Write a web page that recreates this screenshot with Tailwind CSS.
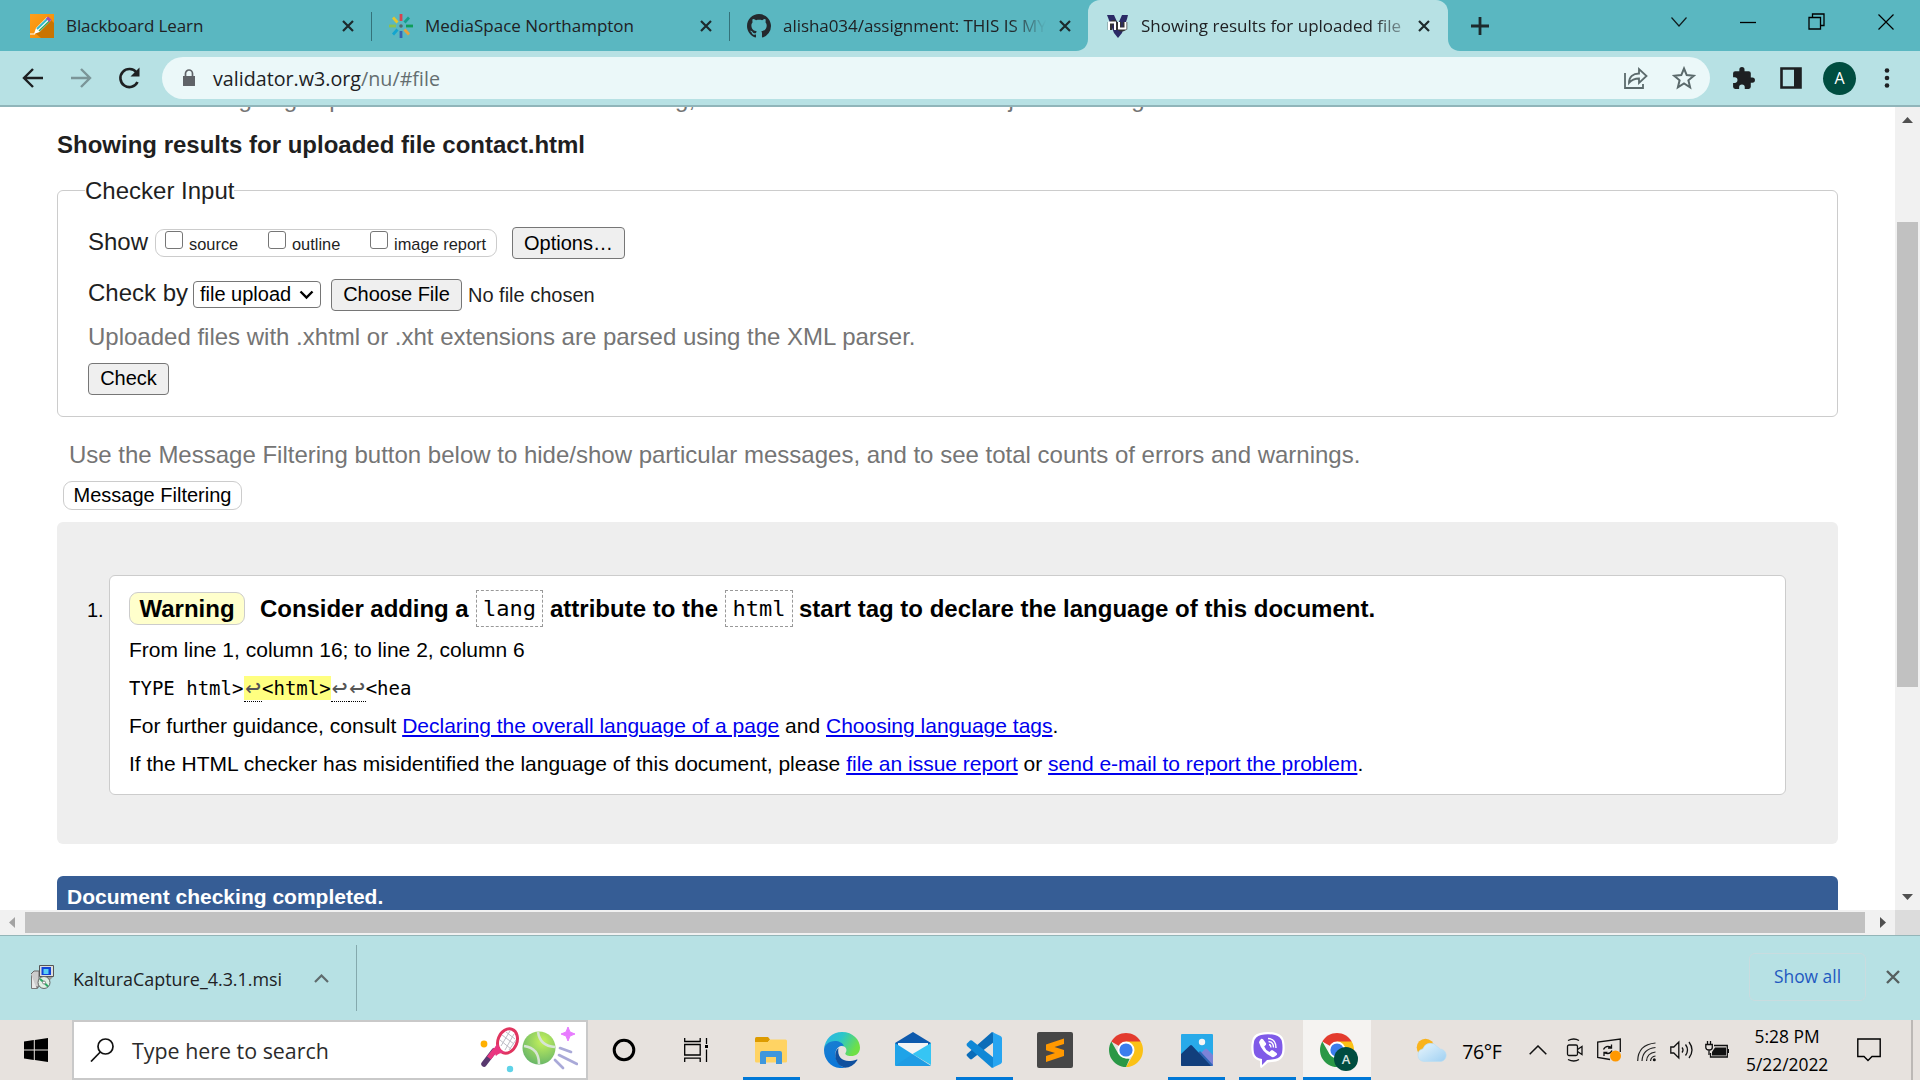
<!DOCTYPE html>
<html lang="en">
<head>
<meta charset="utf-8">
<title>Showing results for uploaded file contact.html</title>
<script src="https://cdn.jsdelivr.net/npm/@tailwindcss/browser@4"></script>
</head>
<body class="w-[1920px] h-[1080px] overflow-hidden flex flex-col bg-white font-['Open_Sans',sans-serif] text-[#202124]">

<!-- Tab strip -->
<header class="h-[51px] shrink-0 flex bg-[#5ab7c1] text-[17px] leading-[51px] whitespace-nowrap">
  <div class="w-[372px] flex items-center pl-[30px] relative">
    <svg class="w-6 h-6 shrink-0" viewBox="0 0 24 24"><defs><linearGradient id="bb" x1="0" y1="0" x2="1" y2="1"><stop offset="0" stop-color="#ff9f1c"/><stop offset="1" stop-color="#f08a00"/></linearGradient></defs><path fill="url(#bb)" d="M0 0h24v24H0z"/><path fill="#c97400" d="M21 6l3 3v15H11l-6-5z"/><path fill="#fff" d="M4 20l2-6L17 3l4 3.500L9.500 18z"/><path stroke="#35b9c8" stroke-width="2" d="M7 15L17.500 4.800"/><path stroke="#3aa657" stroke-width="1.600" d="M9 17L19.500 7"/><path stroke="#a54bb5" stroke-width="3" d="M17 3.500l3.500 3.300"/><path stroke="#fff" d="M0 20h5"/></svg>
    <span class="ml-3 w-[275px] tracking-[-0.1px]">Blackboard Learn</span>
    <svg class="w-3.5 h-3.5 shrink-0" viewBox="0 0 14 14"><path d="M2 2l10 10M12 2L2 12" stroke="#1d2a2c" stroke-width="2.200"/></svg>
    <span class="absolute right-0 top-3 h-[29px] w-px bg-[#34727a]"></span>
  </div>
  <div class="w-[358px] flex items-center pl-[17px] relative">
    <svg class="w-6 h-6 shrink-0" viewBox="0 0 24 24" stroke-width="2.800"><path stroke="#d8434e" d="M12 0v7"/><path stroke="#14a08c" d="M20 3.500l-4.500 5"/><path stroke="#0f9d58" d="M24 12h-7"/><path stroke="#e8a33c" d="M20 20.500l-4.500-5"/><path stroke="#3763b0" d="M12 24v-7"/><path stroke="#13a5cf" d="M4 20.500l4.500-5"/><path stroke="#8cc152" d="M0 12h7"/><path stroke="#e6c72c" d="M4 3.500l4.500 5"/><circle cx="12" cy="12" r="1.800" fill="#56666a" stroke="none"/></svg>
    <span class="ml-3 w-[274px]">MediaSpace Northampton</span>
    <svg class="w-3.5 h-3.5 shrink-0" viewBox="0 0 14 14"><path d="M2 2l10 10M12 2L2 12" stroke="#1d2a2c" stroke-width="2.200"/></svg>
    <span class="absolute right-0 top-3 h-[29px] w-px bg-[#34727a]"></span>
  </div>
  <div class="w-[358px] flex items-center pl-[17px]">
    <svg class="w-6 h-6 shrink-0" viewBox="0 0 16 16"><path fill="#24292e" d="M8 0C3.580 0 0 3.580 0 8c0 3.540 2.290 6.530 5.470 7.590.4.070.55-.17.55-.38 0-.19-.01-.82-.01-1.490-2.010.37-2.530-.49-2.690-.94-.09-.23-.48-.94-.82-1.130-.28-.15-.68-.52-.01-.53.63-.01 1.080.58 1.230.82.72 1.210 1.870.87 2.330.66.07-.52.28-.87.51-1.070-1.780-.2-3.640-.89-3.640-3.950 0-.87.31-1.590.82-2.150-.08-.2-.36-1.020.08-2.120 0 0 .67-.21 2.200.82.64-.18 1.320-.27 2-.27s1.360.09 2 .27c1.530-1.040 2.200-.82 2.200-.82.44 1.100.16 1.920.08 2.120.51.56.82 1.270.82 2.150 0 3.070-1.870 3.750-3.650 3.950.29.25.54.73.54 1.480 0 1.070-.01 1.930-.01 2.200 0 .21.15.46.55.38A8.010 8.010 0 0016 8c0-4.420-3.580-8-8-8z"/></svg>
    <span class="ml-3 w-[263px] mr-3 overflow-hidden tracking-[-0.05px] [mask-image:linear-gradient(to_right,#000_86%,transparent)]">alisha034/assignment: THIS IS MY</span>
    <svg class="w-3.5 h-3.5 shrink-0" viewBox="0 0 14 14"><path d="M2 2l10 10M12 2L2 12" stroke="#1d2a2c" stroke-width="2.200"/></svg>
  </div>
  <div class="w-[360px] flex items-center pl-[18px] bg-[#b7e1e4] rounded-t-[12px] relative">
    <svg class="absolute -left-3 bottom-0 w-3 h-3" viewBox="0 0 12 12"><path fill="#b7e1e4" d="M12 0v12H0C7 12 12 7 12 0z"/></svg>
    <svg class="absolute -right-3 bottom-0 w-3 h-3" viewBox="0 0 12 12"><path fill="#b7e1e4" d="M0 0v12h12C5 12 0 7 0 0z"/></svg>
    <svg class="w-6 h-6 shrink-0" viewBox="0 0 24 24"><path fill="#2b2a66" d="M1 1h7l4 9 4-9h6l-1 4-5 14-4 5-4-5z"/><path fill="none" stroke="#333" stroke-width="4.500" d="M4 16V8M4 10q5-4 6 1v5M13 8v5q1 4 6 1V8"/><path fill="none" stroke="#fff" stroke-width="2" d="M3 16V8.500h6V16M13 8v6.500h6.500V8"/></svg>
    <span class="ml-[11px] w-[262px] mr-[14px] overflow-hidden [mask-image:linear-gradient(to_right,#000_88%,rgba(0,0,0,.35))]">Showing results for uploaded file</span>
    <svg class="w-3.5 h-3.5 shrink-0" viewBox="0 0 14 14"><path d="M2 2l10 10M12 2L2 12" stroke="#1d2a2c" stroke-width="2.200"/></svg>
  </div>
  <div class="flex flex-1 items-center pl-[23px] text-[#101c1e]">
    <svg class="w-[18px] h-[18px]" viewBox="0 0 18 18"><path d="M9 0v18M0 9h18" stroke="#1d2a2c" stroke-width="2.800"/></svg>
    <svg class="ml-[182px] mb-2 w-[16px] h-[16px]" viewBox="0 0 16 16"><path d="M.5 3.500L8 12l7.500-8.500" fill="none" stroke="#101c1e" stroke-width="1.200"/></svg>
    <svg class="ml-[53px] mb-2 w-[16px] h-[16px]" viewBox="0 0 16 16"><path d="M0 8.500h16" stroke="#000" stroke-width="1.300"/></svg>
    <svg class="ml-[52px] mb-2 w-[17px] h-[17px]" viewBox="0 0 17 17"><path d="M1 4.500h11.500V16H1zM4.500 4.500V1H16v11.500h-3.500" fill="none" stroke="#000" stroke-width="1.300"/></svg>
    <svg class="ml-[53px] mb-2 w-[16px] h-[16px]" viewBox="0 0 16 16"><path d="M.5.5l15 15M15.500.5l-15 15" stroke="#000" stroke-width="1.200"/></svg>
  </div>
</header>

<!-- Toolbar -->
<nav class="h-14 shrink-0 flex items-start bg-[#b7e1e4] border-b-2 border-[#90b5ba] pt-1.5 pl-[21px]">
  <div class="flex h-[42px] items-center">
    <svg class="w-6 h-6" viewBox="0 0 24 24"><path d="M22 12H3M12 3l-9 9 9 9" fill="none" stroke="#1d2022" stroke-width="2.400"/></svg>
    <svg class="ml-6 w-6 h-6" viewBox="0 0 24 24"><path d="M2 12h19M12 3l9 9-9 9" fill="none" stroke="#7b9598" stroke-width="2.400"/></svg>
    <svg class="ml-6 w-6 h-6" viewBox="0 0 24 24"><path d="M20.500 16a9 9 0 1 1-1-9.500" fill="none" stroke="#1d2022" stroke-width="2.600"/><path d="M22.500 1.500V10.500h-9z" fill="#1d2022"/></svg>
  </div>
  <div class="ml-[21px] w-[1548px] h-[42px] rounded-full bg-[#ebf8f9] flex items-center pl-[20px]">
    <svg class="w-[14px] h-[18px]" viewBox="0 0 14 18"><path d="M1 7h12v9.500q0 .5-.5.5h-11q-.5 0-.5-.5z" fill="#5f6368"/><path d="M3.500 7V4.500a3.500 3.500 0 0 1 7 0V7" fill="none" stroke="#5f6368" stroke-width="1.700"/></svg>
    <span class="ml-[17px] flex-1 text-[19.700px] leading-[42px] pt-px">validator.w3.org<span class="text-[#646e70]">/nu/#file</span></span>
    <svg class="w-6 h-6" viewBox="0 0 24 24" fill="none" stroke="#5b6a6c" stroke-width="1.800"><path d="M1 7v15h18v-4"/><path d="M5 17c0-6 4-9.500 10-9.500V3l7.500 7-7.500 7v-4.500c-5 0-7.500 1.500-10 4.500z" stroke-linejoin="miter"/></svg>
    <svg class="ml-[24px] mr-[14px] w-6 h-6" viewBox="0 0 24 24"><path d="M12 2.500l2.700 6.600 7.100.6-5.400 4.600 1.700 7L12 17.500l-6.100 3.800 1.700-7L2.200 9.700l7.100-.6z" fill="none" stroke="#5b6a6c" stroke-width="2"/></svg>
  </div>
  <div class="flex h-[42px] items-center">
    <svg class="ml-[21px] w-[25px] h-[25px]" viewBox="0 0 24 24"><path fill="#1d2022" d="M20.500 11H19V7a2 2 0 0 0-2-2h-4V3.500a2.500 2.500 0 0 0-5 0V5H4a2 2 0 0 0-2 2v3.800h1.500a2.700 2.700 0 0 1 0 5.400H2V20a2 2 0 0 0 2 2h3.800v-1.500a2.700 2.700 0 0 1 5.400 0V22H17a2 2 0 0 0 2-2v-4h1.500a2.500 2.500 0 0 0 0-5z"/></svg>
    <svg class="ml-[24px] w-[22px] h-[22px]" viewBox="0 0 22 22"><path d="M1.500 1.500h19v19h-19z" fill="none" stroke="#1d2022" stroke-width="2.600"/><path fill="#1d2022" d="M14 1h7v20h-7z"/></svg>
    <span class="ml-[21px] w-[33px] h-[33px] rounded-full bg-[#004d40] text-white text-[16px] leading-[33px] text-center">A</span>
    <svg class="ml-[28px] w-[6px] h-[20px]" viewBox="0 0 6 20" fill="#1d2022"><circle cx="3" cy="2.500" r="2.300"/><circle cx="3" cy="10" r="2.300"/><circle cx="3" cy="17.500" r="2.300"/></svg>
  </div>
</nav>

<!-- Web page with its vertical scrollbar -->
<div class="h-[803px] shrink-0 flex overflow-hidden">
  <main class="w-[1895px] h-full overflow-hidden pl-[57px] font-['Liberation_Sans',Arial,sans-serif] text-2xl leading-7 text-[#1f1f1f]">
    <p class="-mt-[22px] h-7 text-[#757575] whitespace-nowrap">This tool is an ongoing experiment in better HTML checking, and its behavior remains subject to change</p>
    <h1 class="mt-[18px] h-7 font-bold">Showing results for uploaded file contact.html</h1>
    <fieldset class="mt-[18px] w-[1781px] h-[240px] border border-[#ccc] rounded-md pl-[30px]">
      <legend class="-ml-[3px] h-[26px]">Checker Input</legend>
      <div class="mt-[24px] flex items-start h-8">
        <span class="w-[67px] pt-px">Show</span>
        <div class="mt-0.5 w-[342px] h-7 flex border border-[#ccc] rounded-[9px] text-[16.400px]">
          <span class="ml-[9px] mt-px w-[18px] h-[18px] rounded-[3px] border-[1.500px] border-[#767676] bg-white"></span><span class="ml-[6px] w-[79px]">source</span>
          <span class="mt-px w-[18px] h-[18px] rounded-[3px] border-[1.500px] border-[#767676] bg-white"></span><span class="ml-[6px] w-[78px]">outline</span>
          <span class="mt-px w-[18px] h-[18px] rounded-[3px] border-[1.500px] border-[#767676] bg-white"></span><span class="ml-[6px]">image report</span>
        </div>
        <button class="ml-[15px] w-[113px] h-8 rounded-[4px] border border-[#767676] bg-[#efefef] text-xl leading-7 text-black">Options…</button>
      </div>
      <div class="mt-5 flex items-start h-8">
        <span class="w-[105px]">Check by</span>
        <div class="mt-0.5 w-32 h-[27px] flex items-center rounded-[4px] border border-[#767676] text-xl leading-[24px] pl-[6px] text-black"><span class="pb-0.5">file upload</span>
          <svg class="ml-[8px] w-[15px] h-[10px]" viewBox="0 0 15 10"><path d="M1.500 1.500l6 6 6-6" fill="none" stroke="#000" stroke-width="2.400"/></svg></div>
        <button class="ml-[10px] w-[131px] h-8 pb-0.5 rounded-[4px] border border-[#767676] bg-[#efefef] text-xl leading-7 text-black">Choose File</button>
        <span class="ml-[6px] text-xl leading-8">No file chosen</span>
      </div>
      <p class="mt-3 h-7 text-[#757575]">Uploaded files with .xhtml or .xht extensions are parsed using the XML parser.</p>
      <button class="mt-3 block w-[81px] h-8 pb-0.5 rounded-[4px] border border-[#767676] bg-[#efefef] text-xl leading-7 text-black">Check</button>
    </fieldset>
    <p class="mt-6 ml-3 h-7 text-[#757575]">Use the Message Filtering button below to hide/show particular messages, and to see total counts of errors and warnings.</p>
    <button class="mt-3 ml-[6px] block w-[179px] h-[29px] rounded-[9px] border border-[#ccc] bg-white text-xl leading-[27px] text-black">Message Filtering</button>
    <section class="mt-3 w-[1781px] h-[322px] rounded-md bg-[#eee] pt-[53px] pl-[30px] flex items-start text-black">
      <span class="mt-5 w-[22px] text-xl leading-7 pt-px">1.</span>
      <article class="w-[1677px] h-[220px] rounded-md border border-[#ccc] bg-white pl-[19px] pt-[14px] text-[21px] whitespace-nowrap">
        <div class="flex h-[37px] items-center text-2xl font-bold">
          <span class="w-[116px] h-[33px] leading-[31px] text-center rounded-[9px] border border-[#ccc] bg-[#ffffcc]">Warning</span>
          <span class="ml-[15px] w-[216px] -tracking-[0.040px]">Consider adding a</span>
          <code class="w-[67px] h-[37px] leading-[36px] text-center border border-dashed border-[#999] font-normal text-[22px] font-['DejaVu_Sans_Mono',monospace]">lang</code>
          <span class="ml-[7px] w-[175px]">attribute to the</span>
          <code class="w-[68px] h-[37px] leading-[36px] text-center border border-dashed border-[#999] font-normal text-[22px] font-['DejaVu_Sans_Mono',monospace]">html</code>
          <span class="ml-[6px]">start tag to declare the language of this document.</span>
        </div>
        <p class="mt-[9px] h-7">From line 1, column 16; to line 2, column 6</p>
        <p class="mt-3 h-6 flex text-[19px] leading-[25px] font-['DejaVu_Sans_Mono',monospace]"><span class="w-[115px] whitespace-pre">TYPE html&gt;</span><span class="flex bg-[#ffff80]"><span class="w-[18px] h-[26px] flex justify-center border-b border-dotted border-black text-[#555] text-[26px] leading-[22px]">↩</span>&lt;html&gt;</span><span class="w-[18px] h-[26px] flex justify-center border-b border-dotted border-black text-[#555] text-[26px] leading-[22px]">↩</span><span class="w-[17px] h-[26px] flex justify-center border-b border-dotted border-black text-[#555] text-[26px] leading-[22px]">↩</span>&lt;hea</p>
        <p class="mt-3 h-7">For further guidance, consult <a class="text-[#0000ee] underline decoration-2 underline-offset-2">Declaring the overall language of a page</a> and <a class="text-[#0000ee] underline decoration-2 underline-offset-2">Choosing language tags</a>.</p>
        <p class="mt-[10px] h-7">If the HTML checker has misidentified the language of this document, please <a class="text-[#0000ee] underline decoration-2 underline-offset-2">file an issue report</a> or <a class="text-[#0000ee] underline decoration-2 underline-offset-2">send e-mail to report the problem</a>.</p>
      </article>
    </section>
    <p class="mt-8 w-[1781px] h-[60px] rounded-md bg-[#365d95] pl-[10px] pt-[7px] text-[21px] font-bold text-white">Document checking completed.</p>
  </main>
  <div class="w-[25px] h-full bg-[#f1f1f1] flex flex-col items-center">
    <svg class="mt-[10px] w-[11px] h-[6px]" viewBox="0 0 11 6"><path fill="#505050" d="M0 6L5.500 0 11 6z"/></svg>
    <div class="mt-[99px] w-[21px] h-[465px] bg-[#c1c1c1]"></div>
    <svg class="mt-[207px] w-[11px] h-[6px]" viewBox="0 0 11 6"><path fill="#505050" d="M0 0h11L5.500 6z"/></svg>
  </div>
</div>

<!-- Horizontal scrollbar -->
<div class="h-[25px] shrink-0 flex items-center bg-[#f1f1f1]">
  <svg class="ml-[9px] w-[6px] h-[11px]" viewBox="0 0 6 11"><path fill="#a3a3a3" d="M6 0v11L0 5.500z"/></svg>
  <div class="ml-[10px] w-[1840px] h-[21px] bg-[#c1c1c1]"></div>
  <svg class="ml-[15px] mr-[9px] w-[6px] h-[11px]" viewBox="0 0 6 11"><path fill="#505050" d="M0 0v11l6-5.500z"/></svg>
  <div class="flex-1 h-full bg-[#dcdcdc]"></div>
</div>

<!-- Download shelf -->
<div class="h-[85px] shrink-0 flex items-center bg-[#b7e1e4] border-t border-[#93b5b8] pl-[30px]">
  <svg class="w-6 h-6 mb-0.5" viewBox="0 0 24 24"><path fill="#e8e8e8" stroke="#777" d="M1.500 9.500h6v14h-6z"/><path fill="#ccc" stroke="#666" d="M1 9l3-3h5v16H6"/><path fill="#ddd" stroke="#555" d="M9.500.5h14v11h-14z"/><path fill="#1245d6" d="M11.500 2h9.500v8h-9.500z"/><path fill="#5ad0f5" d="M13.500 4h5v5h-5z"/><path fill="#999" d="M10 12h13l-3 3h-8z"/><circle cx="14" cy="17.500" r="6" fill="#dff0e4" stroke="#666"/><path d="M10 14l4 3.500 4 4" stroke="#2da865" stroke-width="2"/><circle cx="14" cy="17.500" r="1.500" fill="#fff" stroke="#888"/></svg>
  <span class="ml-[19px] pt-0.5 w-[241px] text-[17.900px]">KalturaCapture_4.3.1.msi</span>
  <svg class="w-[15px] h-[9px]" viewBox="0 0 15 9"><path d="M1 8l6.500-6.500L14 8" fill="none" stroke="#5f6b6d" stroke-width="2.200"/></svg>
  <span class="ml-[27px] w-px h-[66px] bg-[#84a9ad]"></span>
  <button class="ml-auto w-[117px] h-12 mb-0.5 pb-0.5 rounded-md border border-[#c9dcdf] text-[17.400px] font-medium text-[#1f59c0]">Show all</button>
  <svg class="ml-5 mr-5 mb-0.5 w-[14px] h-[14px]" viewBox="0 0 14 14"><path d="M1 1l12 12M13 1L1 13" stroke="#56605f" stroke-width="2.400"/></svg>
</div>

<!-- Taskbar -->
<footer class="h-[59px] flex-1 flex bg-[#e7e2de] text-black">
  <div class="w-[72px] flex items-center justify-center">
    <svg class="w-6 h-6" viewBox="0 0 24 24"><path d="M0 3.500l9.800-1.400v9.400H0zM10.800 2L24 0v11.500H10.800zM0 12.500h9.800v9.400L0 20.500zM10.800 12.500H24V24l-13.200-2z"/></svg>
  </div>
  <div class="w-[516px] border-2 border-[#c9c9c9] bg-white flex items-center pl-4">
    <svg class="w-6 h-6" viewBox="0 0 24 24" fill="none" stroke="#111" stroke-width="1.700"><circle cx="15.500" cy="8.500" r="7.500"/><path d="M10.300 14L1 23.500"/></svg>
    <span class="ml-[18px] pt-0.5 flex-1 text-[21.400px] text-[#2b2b2b]">Type here to search</span>
    <svg class="w-[98px] h-[48px] mr-2" viewBox="0 0 98 48">
      <defs><radialGradient id="ball" cx=".6" cy=".3" r=".8"><stop offset="0" stop-color="#c6f25b"/><stop offset="1" stop-color="#5fb06a"/></radialGradient></defs>
      <circle cx="4" cy="18" r="3.400" fill="#ffb000"/><circle cx="30" cy="43" r="3.200" fill="#5fd3e8"/>
      <path d="M4 38L14 25" stroke="#58396f" stroke-width="5.500" stroke-linecap="round"/><path d="M9 32l7-9" stroke="#ea3680" stroke-width="5"/>
      <ellipse cx="27.500" cy="15" rx="9.500" ry="12.500" transform="rotate(22 27.500 15)" fill="#fff" stroke="#e0355f" stroke-width="3"/>
      <path d="M22 9l12 9M20 14l11 9M26 6l9 7M30 5l-9 15M34 8l-9 16M36 14l-7 10" stroke="#bdbdc5" stroke-width="1"/>
      <path d="M14 26q0-6 4-8 2 8 9 9-7-1-11 3z" fill="#ea3680"/>
      <circle cx="59" cy="22" r="16.500" fill="url(#ball)"/>
      <path d="M58 6q2 14 17 15M44 20q15 2 15 18" fill="none" stroke="#d7e5d5" stroke-width="2.500"/>
      <path d="M88 1l2 5 5 2-5 2-2 5-2-5-5-2 5-2z" fill="#e87bff" stroke="#e87bff"/>
      <path d="M80 22l11 4M79 29l18 9M75 34l8 8" stroke="#a9a9d8" stroke-width="2.600" stroke-linecap="round"/>
    </svg>
  </div>
  <div class="w-[72px] flex items-center justify-center"><svg class="w-6 h-6" viewBox="0 0 24 24"><circle cx="12" cy="12" r="9.800" fill="none" stroke="#000" stroke-width="3"/></svg></div>
  <div class="w-[72px] mr-1 flex items-center justify-center"><svg class="w-6 h-6" viewBox="0 0 24 24" fill="none" stroke="#000" stroke-width="1.300"><path d="M.7 0v3.500h15.500V0M.7 6.500h15.500v10.500H.7zM.7 24v-3.800h15.500V24M22.500 0v6M22.500 11.500V24"/><path fill="#000" stroke="none" d="M21 7h3v3h-3z"/></svg></div>

  <div class="w-[70.900px] flex items-center justify-center relative">
    <svg class="w-8 h-[27px]" viewBox="0 0 32 27"><path fill="#dd9b00" d="M0 1.500Q0 0 1.500 0H13l2 2.500L13 5H0z"/><path fill="#ffd363" d="M0 5h13l2-2.500h15.500Q32 2.500 32 4v20.500q0 1-1.500 1h-29Q0 25.500 0 24z"/><path fill="#3f97dd" d="M5 16q0-2 2-2h18q2 0 2 2v11h-6v-7H11v7H5z"/></svg>
    <span class="absolute bottom-0 w-[57px] h-[3px] bg-[#0078d7]"></span>
  </div>
  <div class="w-[70.900px] flex items-center justify-center">
    <svg class="w-9 h-9" viewBox="0 0 36 36"><defs><linearGradient id="e1" x1="0" y1="0" x2="1" y2=".4"><stop offset="0" stop-color="#2bb3ea"/><stop offset=".5" stop-color="#2cc6c9"/><stop offset="1" stop-color="#6fe046"/></linearGradient><linearGradient id="e2" x1="0" y1="0" x2=".4" y2="1"><stop offset="0" stop-color="#1b7fd0"/><stop offset="1" stop-color="#0a76d8"/></linearGradient></defs>
      <path fill="url(#e1)" d="M0 17C1 7 8 0 18 0c11 0 18 8 18 15.500 0 6-4 8.500-9 8.500-4 0-6.500-1.500-5.500-3 2-2.500 1-7-4-7C9 10 2 12 0 17z"/>
      <path fill="url(#e2)" d="M0 18c0-5 5-9 11-9 4 0 8 2 9 5-4-1-8 2-8.500 7C11 28 15 34 21 35.700 9 38 0 29 0 18z"/>
      <path fill="#10509e" d="M14.500 16c-2 10 6 16 18.200 11.500.6-.3 1 .1.600.7C30 33 26 35.500 21 35.700 14 34 10.500 28 11.500 21q.6-3.500 3-5z"/></svg>
  </div>
  <div class="w-[70.900px] flex items-center justify-center">
    <svg class="w-9 h-[34px] mb-0.5" viewBox="0 0 36 34"><path fill="#0e5aad" d="M0 11L18 0l18 11v3H0z"/><path fill="#f4f4f4" d="M3 11h30v6L18 24 3 15z"/><path fill="#1fa3e8" d="M0 11l36 23H1q-1 0-1-1z"/><path fill="#36c5f4" d="M36 11v22L17.500 22z"/><path fill="#1f96e0" d="M0 34l17.500-12L36 34z" opacity=".5"/></svg>
  </div>
  <div class="w-[70.900px] flex items-center justify-center relative">
    <svg class="w-9 h-9" viewBox="0 0 36 36"><path fill="#0b6cb8" d="M26 0l2 1v9L6 27q-1 .8-2 0l-3-3q-1-1 0-2z"/><path fill="#1088d6" d="M1 11.500l3-3q1-.7 2 0L28 26v9l-2 1L1 14q-1-1.200 0-2.500z"/><path fill="#27a5f1" d="M26 0l8.500 4q1.500.8 1.500 2.200v23.600q0 1.400-1.500 2.200L26 36q1-1 1-2.500v-31Q27 1 26 0z"/></svg>
    <span class="absolute bottom-0 w-[57px] h-[3px] bg-[#0078d7]"></span>
  </div>
  <div class="w-[70.900px] flex items-center justify-center">
    <svg class="w-9 h-9" viewBox="0 0 36 36"><rect width="36" height="36" rx="2" fill="#474747"/><path fill="#ff9800" d="M9 12.500L27 6.500v5.500l-9.500 3L27 18v6L9 30v-6l9-3-9-2.800z"/></svg>
  </div>
  <div class="w-[70.900px] flex items-center justify-center">
    <svg class="w-[34px] h-[34px]" viewBox="0 0 34 34"><path fill="#e33b2e" d="M17 17L2.300 8.500a17 17 0 0 1 29.400 0z"/><path fill="#fbc116" d="M17 17V8.500h14.700A17 17 0 0 1 17 34l7.400-12.700z"/><path fill="#2a9846" d="M2.300 8.500l7.300 12.700L17 25.500l3.500.5L17 34A17 17 0 0 1 2.300 8.500z"/><circle cx="17" cy="17" r="8.500" fill="#fff"/><circle cx="17" cy="17" r="6.600" fill="#3b7ded"/></svg>
  </div>
  <div class="w-[70.900px] flex items-center justify-center relative">
    <svg class="w-8 h-8" viewBox="0 0 32 32"><rect width="32" height="32" rx="1" fill="#28aae9"/><path fill="#7b83d8" d="M16 23l8-8q1-1 2 0l6 6v10q0 1-1 1H18z"/><path fill="#2f66b4" d="M14 22l5-5 13 14-1 1H16z"/><path fill="#123f7c" d="M0 20l9-8.500q1-1 2 0L30 32H1q-1 0-1-1z"/><circle cx="21" cy="8" r="3.200" fill="#f5f5f5"/></svg>
    <span class="absolute bottom-0 w-[57px] h-[3px] bg-[#0078d7]"></span>
  </div>
  <div class="w-[70.900px] flex items-center justify-center relative">
    <svg class="w-[34px] h-[36px]" viewBox="0 0 34 36"><path fill="#fff" d="M9 1q8-2 16 0 7 2 8 8 1.500 7 0 13-2 6-8 7.500l-8 1L10.500 36Q9 36 9 34v-5Q2 27 1 21-.5 15 1 9 2 2.500 9 1z"/><path fill="#7f5ae8" d="M10 3q7-1.500 14 0 6 1.500 7 7 1 5.500 0 11-1.500 5-7 6l-8 1-5 5v-6q-7-1-8-6-1-6 0-11Q4 4.500 10 3z"/><path fill="#fff" d="M10 7q1-.8 2 .3l3 4q.4 1-.5 2l-1.300 1.200q1.500 4 5.300 5.500l1.500-1.500q1-.9 2 0l3.500 2.600q1 1 .2 2Q23 26 21 25 11 20.500 8 10.500 8 9 10 7z"/><path d="M17 6.500q8 .5 8 9.500M17.500 9.500q5 .5 5 6M18 12.500q2 .3 2 3" fill="none" stroke="#fff" stroke-width="1.400"/></svg>
    <span class="absolute bottom-0 w-[57px] h-[3px] bg-[#0078d7]"></span>
  </div>
  <div class="w-[68px] flex items-center justify-center relative bg-[#f5f3f1]">
    <svg class="w-[34px] h-[34px]" viewBox="0 0 34 34"><path fill="#e33b2e" d="M17 17L2.300 8.500a17 17 0 0 1 29.400 0z"/><path fill="#fbc116" d="M17 17V8.500h14.700A17 17 0 0 1 17 34l7.400-12.700z"/><path fill="#2a9846" d="M2.300 8.500l7.300 12.700L17 25.500l3.500.5L17 34A17 17 0 0 1 2.300 8.500z"/><circle cx="17" cy="17" r="8.500" fill="#fff"/><circle cx="17" cy="17" r="6.600" fill="#3b7ded"/></svg>
    <span class="absolute left-[31px] top-[27px] w-6 h-6 rounded-full bg-[#004d40] text-[#d6e4e1] text-[13px] font-semibold leading-6 text-center">A</span>
    <span class="absolute bottom-0 left-0 w-full h-[3px] bg-[#0078d7]"></span>
  </div>

  <!-- Notification area -->
  <div class="flex flex-1 items-center">
    <svg class="ml-[45px] w-8 h-6" viewBox="0 0 32 24"><defs><linearGradient id="cl" x1="0" y1="0" x2="1" y2="1"><stop offset="0" stop-color="#e9f6fd"/><stop offset="1" stop-color="#9fd0f2"/></linearGradient></defs><circle cx="9.500" cy="9.500" r="8.800" fill="#f9b31c"/><path fill="url(#cl)" stroke="#b9ddf4" stroke-width=".6" d="M8 23.500a6.500 6.500 0 0 1-1-12.800A8 8 0 0 1 21 8.500a7 7 0 0 1 3 2.500 6.300 6.300 0 0 1 1 12.500z"/></svg>
    <span class="ml-[14px] w-[67px] text-[19.500px] tracking-[-0.300px] pt-1">76°F</span>
    <svg class="w-[18px] h-[10px]" viewBox="0 0 18 10"><path d="M.7 9.300L9 1l8.300 8.300" fill="none" stroke="#111" stroke-width="1.500"/></svg>
    <svg class="ml-[19px] w-[18px] h-6" viewBox="0 0 18 24" fill="none" stroke="#111" stroke-width="1.300"><path d="M2 2.500q6-3 11 0M2 21.500q6 3 11 0"/><rect x="1.500" y="7" width="10" height="10.500" rx="1.500"/><path d="M11.500 11.500l4.500-3v8l-4.500-3"/></svg>
    <svg class="ml-[13px] w-6 h-6" viewBox="0 0 24 24" fill="none" stroke="#111" stroke-width="1.300"><path d="M13 21.500L.7 19.500V4l22.600-3v13"/><path d="M6.500 11.500q2-4.500 7.500-2.500M14.500 6.500V10H11M15 12.500q-2 4.500-7.500 2.500M7 18v-3.500h3.500"/><circle cx="18.500" cy="18" r="5.500" fill="#ff9800" stroke="none"/></svg>
    <svg class="ml-[16px] mt-1 w-5 h-5" viewBox="0 0 20 20" fill="none" stroke="#222" stroke-width="1.200"><path d="M.7 19Q1 2.500 18.500 1M5 19Q5.500 7 18.500 5.500M9.500 19Q10 11 18.500 10M13.500 19q.5-4.500 5-5"/><circle cx="17.300" cy="17.800" r="1.500" fill="#111" stroke="none"/></svg>
    <svg class="ml-[13px] w-[23px] h-5" viewBox="0 0 23 20" fill="none" stroke="#111" stroke-width="1.300"><path d="M.8 7v6h3l5 5V2l-5 5zM12 7.500q2 2.500 0 5M15.500 4.500q4 5.500 0 11M19 2q6 8 0 16"/></svg>
    <svg class="ml-[12px] w-6 h-[18px]" viewBox="0 0 24 18" fill="none" stroke="#111" stroke-width="1.300"><path d="M9 4.500h13.300v11.500H5.500V12"/><path d="M7 14.500V11l3-4.500h11v8z" fill="#111" stroke="none"/><path d="M23.500 8v4M2.500 0v3M5.500 0v3M.8 3.500h6.500v3q0 2.500-3.200 2.500T.8 6.500zM4 9v5"/></svg>
    <div class="ml-[14px] w-[88px] text-center text-[17.400px] leading-7 whitespace-nowrap">5:28 PM<br>5/22/2022</div>
    <svg class="ml-[26px] w-6 h-6" viewBox="0 0 24 24"><path d="M.8 1h22.400v17.500H15l-4 4-4-4H.8z" fill="none" stroke="#000" stroke-width="1.400"/></svg>
    <span class="ml-[30px] w-0.5 h-full bg-[#bcb8b5]"></span>
  </div>
</footer>
</body>
</html>
